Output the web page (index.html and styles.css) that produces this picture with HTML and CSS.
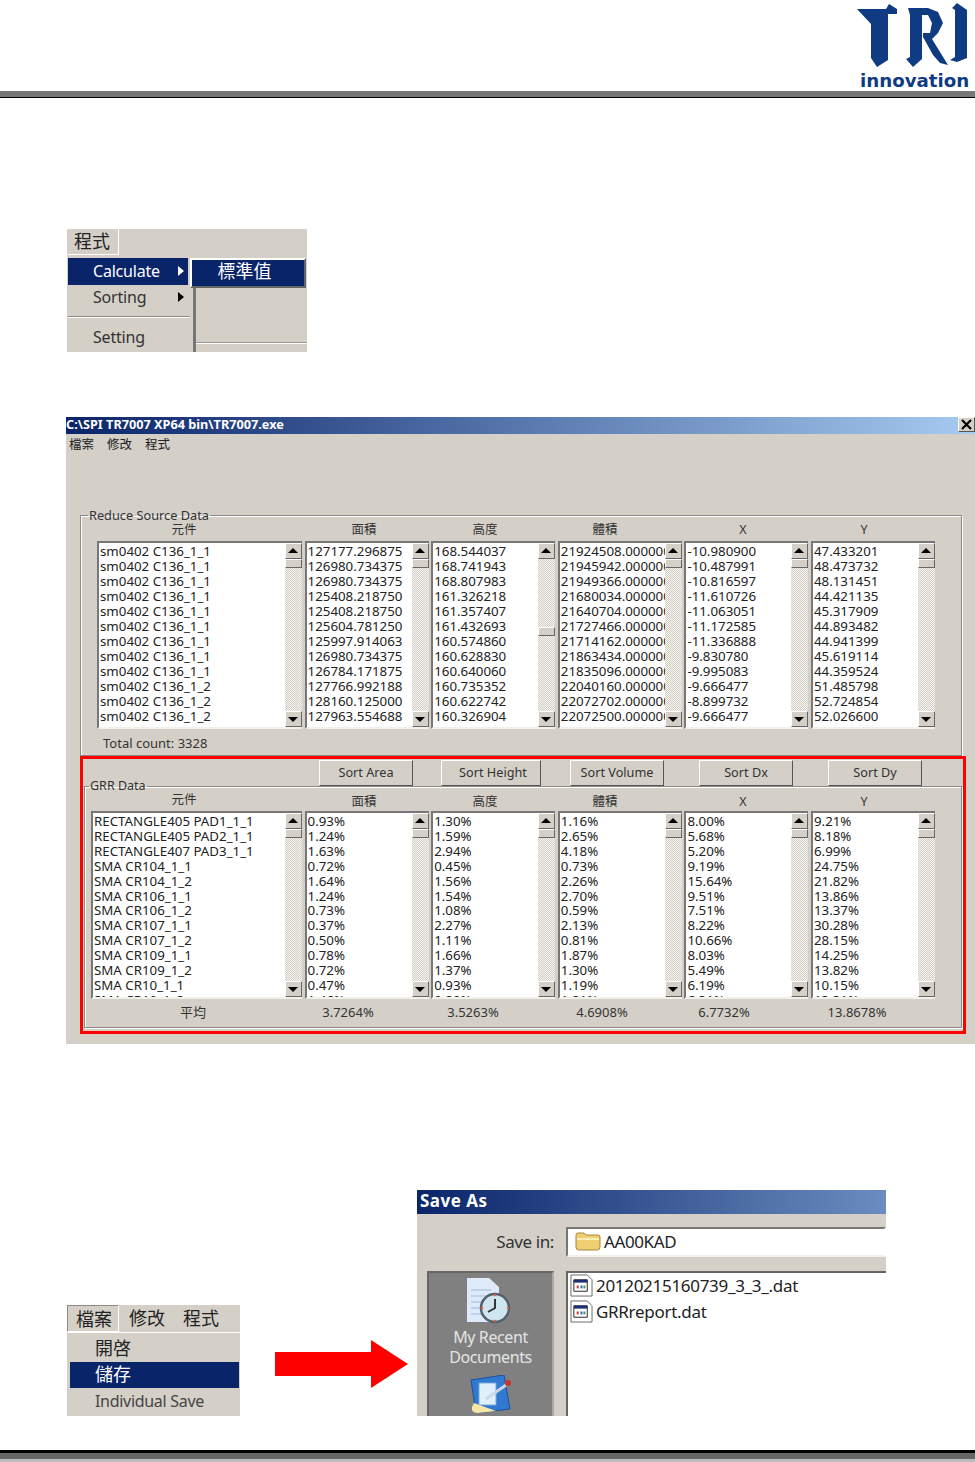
FILE: index.html
```html
<!DOCTYPE html>
<html lang="zh-Hant">
<head>
<meta charset="utf-8">
<title>TRI innovation</title>
<link rel="stylesheet" href="styles.css">
</head>
<body>
<header class="page-head">
  <div class="logo">
    <svg class="logo-mark" viewBox="0 0 111 68" aria-hidden="true">
      <path d="M0 6H29L32 1 40 6V11H31V57L20 64 14 55V21Z"/>
      <path d="M51 5H71L81 9 86 20 81 30 75 36 91 62 83 60 76 52 66 34V30H73L75 20 71 12H65V56L56 64 49 56 53 54V12Z"/>
      <path d="M100 0 110 7V55L100 59 93 57 98 54V7L95 5Z"/>
    </svg>
    <span class="logo-text">innovation</span>
  </div>
</header>

<section class="shot-program">
  <div class="menubar-big"><span class="tab">程式</span></div>
  <div class="program-body">
    <div class="drop">
      <div class="item selected"><span>Calculate</span><i class="tri tri-white"></i></div>
      <div class="item"><span>Sorting</span><i class="tri"></i></div>
      <div class="sep"></div>
      <div class="item item-last"><span>Setting</span></div>
    </div>
    <div class="sub">
      <div class="sub-panel"><div class="sub-item">標準值</div></div>
      <div class="sub-under"></div>
    </div>
  </div>
</section>

<section class="window">
  <div class="titlebar"><span class="title-text">C:\SPI TR7007 XP64 bin\TR7007.exe</span><span class="close"><svg viewBox="0 0 15 13" aria-hidden="true"><path d="M3 2 12 11M12 2 3 11" stroke="#000" stroke-width="2.2"/></svg></span></div>
  <nav class="win-menu"><span>檔案</span><span>修改</span><span>程式</span></nav>

  <fieldset class="group group-source">
    <legend>Reduce Source Data</legend>
    <div class="labels">
      <span>元件</span><span>面積</span><span>高度</span><span>體積</span><span>X</span><span>Y</span>
    </div>
    <div class="lists lists-source">
      <div class="list"><pre class="rows">sm0402 C136_1_1
sm0402 C136_1_1
sm0402 C136_1_1
sm0402 C136_1_1
sm0402 C136_1_1
sm0402 C136_1_1
sm0402 C136_1_1
sm0402 C136_1_1
sm0402 C136_1_1
sm0402 C136_1_2
sm0402 C136_1_2
sm0402 C136_1_2
sm0402 C136_1_3</pre><div class="sb"><b class="up"></b><b class="thumb"></b><b class="track"></b><b class="down"></b></div></div>
      <div class="list"><pre class="rows">127177.296875
126980.734375
126980.734375
125408.218750
125408.218750
125604.781250
125997.914063
126980.734375
126784.171875
127766.992188
128160.125000
127963.554688
131501.718750</pre><div class="sb"><b class="up"></b><b class="thumb"></b><b class="track"></b><b class="down"></b></div></div>
      <div class="list"><pre class="rows">168.544037
168.741943
168.807983
161.326218
161.357407
161.432693
160.574860
160.628830
160.640060
160.735352
160.622742
160.326904
172.144287</pre><div class="sb"><b class="up"></b><b class="track track-upper"></b><b class="thumb"></b><b class="track"></b><b class="down"></b></div></div>
      <div class="list"><pre class="rows">21924508.000000
21945942.000000
21949366.000000
21680034.000000
21640704.000000
21727466.000000
21714162.000000
21863434.000000
21835096.000000
22040160.000000
22072702.000000
22072500.000000
23401000.000000</pre><div class="sb"><b class="up"></b><b class="thumb"></b><b class="track"></b><b class="down"></b></div></div>
      <div class="list"><pre class="rows">-10.980900
-10.487991
-10.816597
-11.610726
-11.063051
-11.172585
-11.336888
-9.830780
-9.995083
-9.666477
-8.899732
-9.666477
-10.341527</pre><div class="sb"><b class="up"></b><b class="thumb"></b><b class="track"></b><b class="down"></b></div></div>
      <div class="list"><pre class="rows">47.433201
48.473732
48.131451
44.421135
45.317909
44.893482
44.941399
45.619114
44.359524
51.485798
52.724854
52.026600
49.712330</pre><div class="sb"><b class="up"></b><b class="thumb"></b><b class="track"></b><b class="down"></b></div></div>
    </div>
    <p class="total">Total count: 3328</p>
  </fieldset>

  <div class="red-frame">
    <div class="sort-row">
      <button class="btn btn-area">Sort Area</button>
      <button class="btn btn-height">Sort Height</button>
      <button class="btn btn-volume">Sort Volume</button>
      <button class="btn btn-dx">Sort Dx</button>
      <button class="btn btn-dy">Sort Dy</button>
    </div>
    <fieldset class="group group-grr">
      <legend>GRR Data</legend>
      <div class="labels labels-grr">
        <span class="raise">元件</span><span>面積</span><span>高度</span><span>體積</span><span>X</span><span>Y</span>
      </div>
      <div class="lists lists-grr">
        <div class="list"><pre class="rows">RECTANGLE405 PAD1_1_1
RECTANGLE405 PAD2_1_1
RECTANGLE407 PAD3_1_1
SMA CR104_1_1
SMA CR104_1_2
SMA CR106_1_1
SMA CR106_1_2
SMA CR107_1_1
SMA CR107_1_2
SMA CR109_1_1
SMA CR109_1_2
SMA CR10_1_1
SMA CR10_1_2</pre><div class="sb"><b class="up"></b><b class="thumb"></b><b class="track"></b><b class="down"></b></div></div>
        <div class="list"><pre class="rows">0.93%
1.24%
1.63%
0.72%
1.64%
1.24%
0.73%
0.37%
0.50%
0.78%
0.72%
0.47%
1.46%</pre><div class="sb"><b class="up"></b><b class="thumb"></b><b class="track"></b><b class="down"></b></div></div>
        <div class="list"><pre class="rows">1.30%
1.59%
2.94%
0.45%
1.56%
1.54%
1.08%
2.27%
1.11%
1.66%
1.37%
0.93%
0.80%</pre><div class="sb"><b class="up"></b><b class="thumb"></b><b class="track"></b><b class="down"></b></div></div>
        <div class="list"><pre class="rows">1.16%
2.65%
4.18%
0.73%
2.26%
2.70%
0.59%
2.13%
0.81%
1.87%
1.30%
1.19%
1.21%</pre><div class="sb"><b class="up"></b><b class="thumb"></b><b class="track"></b><b class="down"></b></div></div>
        <div class="list"><pre class="rows">8.00%
5.68%
5.20%
9.19%
15.64%
9.51%
7.51%
8.22%
10.66%
8.03%
5.49%
6.19%
6.31%</pre><div class="sb"><b class="up"></b><b class="thumb"></b><b class="track"></b><b class="down"></b></div></div>
        <div class="list"><pre class="rows">9.21%
8.18%
6.99%
24.75%
21.82%
13.86%
13.37%
30.28%
28.15%
14.25%
13.82%
10.15%
13.31%</pre><div class="sb"><b class="up"></b><b class="thumb"></b><b class="track"></b><b class="down"></b></div></div>
      </div>
      <div class="averages">
        <span>平均</span><span>3.7264%</span><span>3.5263%</span><span>4.6908%</span><span>6.7732%</span><span>13.8678%</span>
      </div>
    </fieldset>
  </div>
</section>

<section class="bottom-row">
  <div class="file-menu">
    <div class="file-bar"><span class="file-tab">檔案</span><span>修改</span><span>程式</span></div>
    <div class="file-drop">
      <div class="file-item">開啓</div>
      <div class="file-item file-selected">儲存</div>
      <div class="file-item file-latin">Individual Save</div>
    </div>
  </div>
  <svg class="arrow" viewBox="0 0 133 48" aria-hidden="true"><path d="M0 12H96V0L133 24 96 48V36H0Z"/></svg>
  <div class="save-dialog">
    <div class="save-title">Save As</div>
    <div class="save-top">
      <span class="save-label">Save in:</span>
      <div class="combo">
        <svg class="folder" viewBox="0 0 26 20" aria-hidden="true"><path d="M1 4Q1 2 3 2H9L11 4H23Q25 4 25 6V16Q25 19 22 19H4Q1 19 1 16Z" fill="#f0cf73" stroke="#a9873a"/><path d="M2 8H24" stroke="#fbeeb5" stroke-width="2"/></svg>
        <span>AA00KAD</span>
      </div>
    </div>
    <div class="save-main">
      <div class="places">
        <svg class="place-icon" viewBox="0 0 48 46" aria-hidden="true">
          <path d="M2 0H24L34 9V44H2Z" fill="#dfeaf8"/>
          <path d="M6 12H26M6 18H22M6 24H20M6 30H20M6 36H22" stroke="#9db9de"/>
          <circle cx="30" cy="30" r="14" fill="#cfe6f2" stroke="#55606a" stroke-width="2.5"/>
          <path d="M30 21V30L23 34" fill="none" stroke="#333" stroke-width="2"/>
          <circle cx="30" cy="17" r="1.2" fill="#e0603a"/><circle cx="43" cy="30" r="1.2" fill="#e0603a"/><circle cx="30" cy="43" r="1.2" fill="#e0603a"/><circle cx="17" cy="30" r="1.2" fill="#e0603a"/>
        </svg>
        <span class="place-text">My Recent<br>Documents</span>
        <svg class="place-icon2" viewBox="0 0 46 38" aria-hidden="true">
          <path d="M3 5 36 0 42 34 8 38Z" fill="#2f79d0" stroke="#1b4f9c"/>
          <path d="M11 8H28V30H11Z" fill="#dff0fb" stroke="#7aa8d8"/>
          <path d="M4 32Q3 38 10 38L28 36 6 28Z" fill="#f6e6a8"/>
          <path d="M18 24 38 10" stroke="#ccd6e6" stroke-width="3"/>
          <circle cx="40" cy="8" r="3" fill="#c8342c"/>
        </svg>
      </div>
      <div class="file-list">
        <div class="file-row">
          <svg class="dat" viewBox="0 0 24 24" aria-hidden="true"><path d="M1 1H18L23 6V23H1Z" fill="#fff" stroke="#666"/><path d="M4 6H18V18H4Z" fill="#fff" stroke="#222"/><path d="M4 6H18V9H4Z" fill="#1c2f78"/><path d="M7 12H9V15H7Z" fill="#c13a2e"/><path d="M11 12H13V15H11Z" fill="#2a63c2"/><path d="M14 12H16V15H14Z" fill="#3a9a4a"/></svg>
          <span>20120215160739_3_3_.dat</span>
        </div>
        <div class="file-row">
          <svg class="dat" viewBox="0 0 24 24" aria-hidden="true"><path d="M1 1H18L23 6V23H1Z" fill="#fff" stroke="#666"/><path d="M4 6H18V18H4Z" fill="#fff" stroke="#222"/><path d="M4 6H18V9H4Z" fill="#1c2f78"/><path d="M7 12H9V15H7Z" fill="#c13a2e"/><path d="M11 12H13V15H11Z" fill="#2a63c2"/><path d="M14 12H16V15H14Z" fill="#3a9a4a"/></svg>
          <span>GRRreport.dat</span>
        </div>
      </div>
    </div>
  </div>
</section>

<footer class="page-foot"></footer>
</body>
</html>
```

FILE: styles.css
```css
* { box-sizing: border-box; }
html, body { margin: 0; padding: 0; background: #fff; }
body {
  width: 975px;
  height: 1462px;
  overflow: hidden;
  font-family: "Noto Sans", "Noto Sans CJK TC", sans-serif;
  color: #222;
}

/* page header */
.page-head {
  height: 98px;
  display: flex;
  justify-content: flex-end;
  border-bottom: 1px solid #000;
  background: linear-gradient(#fff 0 91px, #777 91px);
  padding-right: 7px;
}
.logo { width: 111px; display: flex; flex-direction: column; padding-top: 3px; }
.logo-mark { width: 111px; height: 68px; fill: #0f3b82; display: block; flex: none; }
.logo-text {
  font: 700 18.2px/16px "DejaVu Sans", "Liberation Sans", sans-serif;
  color: #0f3b82;
  margin-top: 2px;
  padding-left: 3px;
  white-space: nowrap;
}

/* program menu screenshot */
.shot-program {
  margin: 131px 0 0 67px;
  width: 240px;
  height: 123px;
  background: #d4d0c8;
  display: flex;
  flex-direction: column;
}
.menubar-big { height: 26px; }
.tab {
  display: block;
  width: 52px;
  height: 26px;
  font-size: 18px;
  line-height: 25px;
  padding-left: 7px;
  border-right: 1px solid #fff;
  border-bottom: 1px solid #fff;
}
.program-body { display: flex; flex: 1; padding-top: 3px; }
.drop { width: 124px; padding-left: 1px; font-size: 16px; }
.item {
  width: 120px;
  height: 25px;
  display: flex;
  align-items: center;
  justify-content: space-between;
  padding: 0 4px 2px 25px;
  line-height: 22px;
  color: #333;
  letter-spacing: -0.2px;
}
.item.selected { height: 27px; background: #0a246a; color: #fff; }
.tri {
  width: 0;
  height: 0;
  border-left: 6px solid #000;
  border-top: 5px solid transparent;
  border-bottom: 5px solid transparent;
}
.tri-white { border-left-color: #fff; }
.sep {
  width: 122px;
  height: 2px;
  margin-top: 6px;
  background: #8c8a84;
  border-bottom: 1px solid #fff;
}
.item-last { height: 27px; margin-top: 6px; }
.sub { width: 116px; display: flex; flex-direction: column; flex: 1; }
.sub-panel {
  width: 116px;
  height: 30px;
  border: 2px solid;
  border-color: #fff #666 #666 #fff;
  background: #0a246a;
  margin-left: -1px;
}
.sub-item { color: #fff; font-size: 18px; line-height: 23px; text-align: center; padding-right: 7px; }
.sub-under {
  flex: 1;
  margin-left: 2px;
  border-left: 3px solid #777;
  background: linear-gradient(#d4d0c8 0 54px, #99968f 54px 55px, #fff 55px 56px, #d4d0c8 56px);
}

/* main window screenshot */
.window {
  margin: 65px 0 0 66px;
  width: 909px;
  height: 627px;
  background: #d4d0c8;
  font-size: 12px;
  display: flex;
  flex-direction: column;
}
.titlebar {
  height: 17px;
  flex: none;
  background: linear-gradient(90deg, #0a246a, #a6caf0);
  display: flex;
  justify-content: space-between;
  align-items: flex-start;
}
.title-text {
  color: #fff;
  font: 700 12.7px/15px "Noto Sans", sans-serif;
}
.close {
  width: 17px;
  height: 15px;
  background: #d4d0c8;
  border: 1px solid;
  border-color: #fff #555 #555 #fff;
  display: block;
}
.close svg { display: block; width: 15px; height: 13px; }
.win-menu {
  height: 21px;
  flex: none;
  display: flex;
  gap: 13px;
  padding: 3px 0 0 3px;
  font-size: 12.5px;
  line-height: 16px;
}
.group {
  margin: 0;
  padding: 0;
  min-width: 0;
  border: 1px solid #8c8a84;
  box-shadow: inset 1px 1px 0 #fff, 1px 1px 0 #fff;
}
.group legend {
  margin-left: 7px;
  padding: 0 1px;
  font-size: 12.75px;
  line-height: 16px;
  color: #333;
}
.group-source {
  margin: 52px 0 0 14px;
  width: 882px;
  height: 249px;
  flex: none;
}
.labels {
  height: 18px;
  padding-left: 17px;
  display: grid;
  grid-template-columns: 172px 188px 54px 186px 90px 152px;
  text-align: center;
  font-size: 12.5px;
  line-height: 14px;
  color: #333;
}
.lists {
  height: 188px;
  display: grid;
  grid-template-columns: 205px 124px 124px 124px 124px 124px;
  column-gap: 2.6px;
  padding-left: 16px;
}
.list {
  height: 188px;
  background: #fff;
  border: 2px solid;
  border-right-width: 0;
  border-color: #777 #f2f0ea #f2f0ea #777;
  display: flex;
  overflow: hidden;
}
.rows {
  margin: 0;
  flex: 1;
  min-width: 0;
  overflow: hidden;
  padding: 1px 0 0 1px;
  font: 13.3px/15px "Noto Sans", sans-serif;
  color: #222;
}
.sb {
  width: 17px;
  flex: none;
  display: flex;
  flex-direction: column;
  background: #e2e0da;
}
.sb b { display: block; flex: none; background: #d4d0c8; }
.sb .up, .sb .down {
  height: 16px;
  border: 1px solid;
  border-color: #fff #666 #666 #fff;
  position: relative;
}
.sb .up::after, .sb .down::after {
  content: "";
  position: absolute;
  left: 2px;
  width: 0;
  height: 0;
  border-left: 5px solid transparent;
  border-right: 5px solid transparent;
}
.sb .up::after { top: 4px; border-bottom: 5px solid #000; }
.sb .down::after { top: 5px; border-top: 5px solid #000; }
.sb .thumb {
  height: 9px;
  border: 1px solid;
  border-color: #fff #666 #666 #fff;
}
.sb .track {
  flex: 1;
  background: repeating-conic-gradient(#d4d0c8 0 25%, #f4f3ef 0 50%) 0 0 / 2px 2px;
}
.sb .track-upper { flex: none; height: 68px; }
.total { margin: 6px 0 0 22px; font-size: 13px; line-height: 16px; color: #333; }

.red-frame {
  margin: 0 0 0 14px;
  width: 886px;
  height: 278px;
  flex: none;
  border: 3px solid #f00;
  display: flex;
  flex-direction: column;
  background: #d4d0c8;
}
.sort-row { display: flex; height: 26px; padding-left: 236px; margin-top: 1px; flex: none; }
.btn {
  width: 94px;
  height: 26px;
  padding: 0 0 2px;
  background: #d4d0c8;
  border: 1px solid;
  border-color: #fff #555 #555 #fff;
  font: 12.7px/16px "Noto Sans", sans-serif;
  color: #333;
}
.btn-height { width: 100px; margin-left: 28px; padding-left: 4px; }
.btn-volume { margin-left: 29px; }
.btn-dx { margin-left: 35px; }
.btn-dy { margin-left: 35px; }
.group-grr {
  margin: -8px 0 0 1px;
  width: 878px;
  height: 250px;
  flex: none;
}
.group-grr legend { margin-left: 4px; font-size: 12.5px; }
.labels-grr { margin-top: -2px; padding-left: 13px; height: 15px; line-height: 16px; align-items: end; }
.raise { margin-bottom: 2px; }
.lists-grr {
  margin-top: 4px;
  grid-template-columns: 211px 124px 124px 124px 124px 124px;
  padding-left: 6px;
}
.lists-grr .rows { line-height: 14.9px; }
.averages {
  display: grid;
  grid-template-columns: 216px 94px 156px 102px 142px 124px;
  margin-top: 5px;
  text-align: center;
  font-size: 13px;
  line-height: 16px;
  color: #333;
}

/* bottom row */
.bottom-row {
  margin: 146px 0 0 67px;
  height: 226px;
  display: flex;
  align-items: flex-end;
}
.file-menu { width: 173px; height: 111px; background: #d4d0c8; display: flex; flex-direction: column; flex: none; }
.file-bar {
  height: 28px;
  flex: none;
  display: flex;
  gap: 18px;
  font-size: 18px;
  line-height: 26px;
  border-bottom: 1px solid #fff;
}
.file-tab {
  width: 52px;
  margin-right: -8px;
  padding-left: 8px;
  border: 1px solid;
  border-color: #8c8a84 #fff #fff #8c8a84;
}
.file-drop { flex: 1; padding: 3px 1px 0 3px; }
.file-item { height: 26px; padding-left: 25px; font-size: 18px; line-height: 24px; color: #222; }
.file-selected { background: #0a246a; color: #fff; }
.file-latin { font-size: 16px; line-height: 26px; color: #444; letter-spacing: -0.3px; }
.arrow { width: 133px; height: 48px; margin: 0 9px 28px 35px; fill: #f00; flex: none; }

.save-dialog { width: 469px; height: 226px; background: #d4d0c8; display: flex; flex-direction: column; overflow: hidden; flex: none; }
.save-title {
  height: 24px;
  flex: none;
  background: linear-gradient(90deg, #0a246a, #6a8cbf);
  color: #fff;
  font: 700 17px/22px "Noto Sans", sans-serif;
  padding-left: 3px;
  letter-spacing: 0.5px;
}
.save-top { display: flex; height: 57px; flex: none; padding-top: 13px; }
.save-label { width: 137px; padding-top: 3px; text-align: right; font-size: 17px; line-height: 24px; letter-spacing: -0.4px; color: #333; }
.combo {
  margin-left: 12px;
  flex: 1;
  height: 30px;
  background: #fff;
  border: 2px solid;
  border-color: #777 transparent #f2f0ea #777;
  display: flex;
  align-items: center;
  gap: 3px;
  padding: 0 0 2px 7px;
  font-size: 17px;
  letter-spacing: -0.4px;
  color: #222;
}
.folder { width: 26px; height: 20px; flex: none; }
.save-main { flex: 1; display: flex; padding-left: 10px; min-height: 0; }
.places {
  width: 127px;
  background: #808080;
  border: 2px solid #666;
  border-right-color: #aaa;
  border-bottom: 0;
  display: flex;
  flex-direction: column;
  align-items: center;
  color: #e4e4e4;
  font-size: 16px;
  line-height: 20px;
  letter-spacing: -0.4px;
  text-align: center;
  padding-top: 5px;
  overflow: hidden;
}
.place-icon { width: 48px; height: 46px; flex: none; margin-right: 4px; }
.place-text { margin-top: 3px; }
.place-icon2 { width: 46px; height: 38px; margin-top: 8px; flex: none; }
.file-list {
  margin-left: 12px;
  flex: 1;
  background: #fff;
  border-top: 2px solid #666;
  border-left: 2px solid #666;
  padding: 0 0 0 2px;
  font-size: 17px;
  color: #222;
  letter-spacing: -0.3px;
}
.file-row { height: 26px; margin-top: -1px; margin-bottom: 1px; display: flex; align-items: center; gap: 3px; }
.dat { width: 23px; height: 23px; flex: none; }

/* page footer */
.page-foot {
  margin-top: 34px;
  height: 12px;
  background: linear-gradient(#000 0 3px, #666 3px 9px, #bbb 9px);
}
```
